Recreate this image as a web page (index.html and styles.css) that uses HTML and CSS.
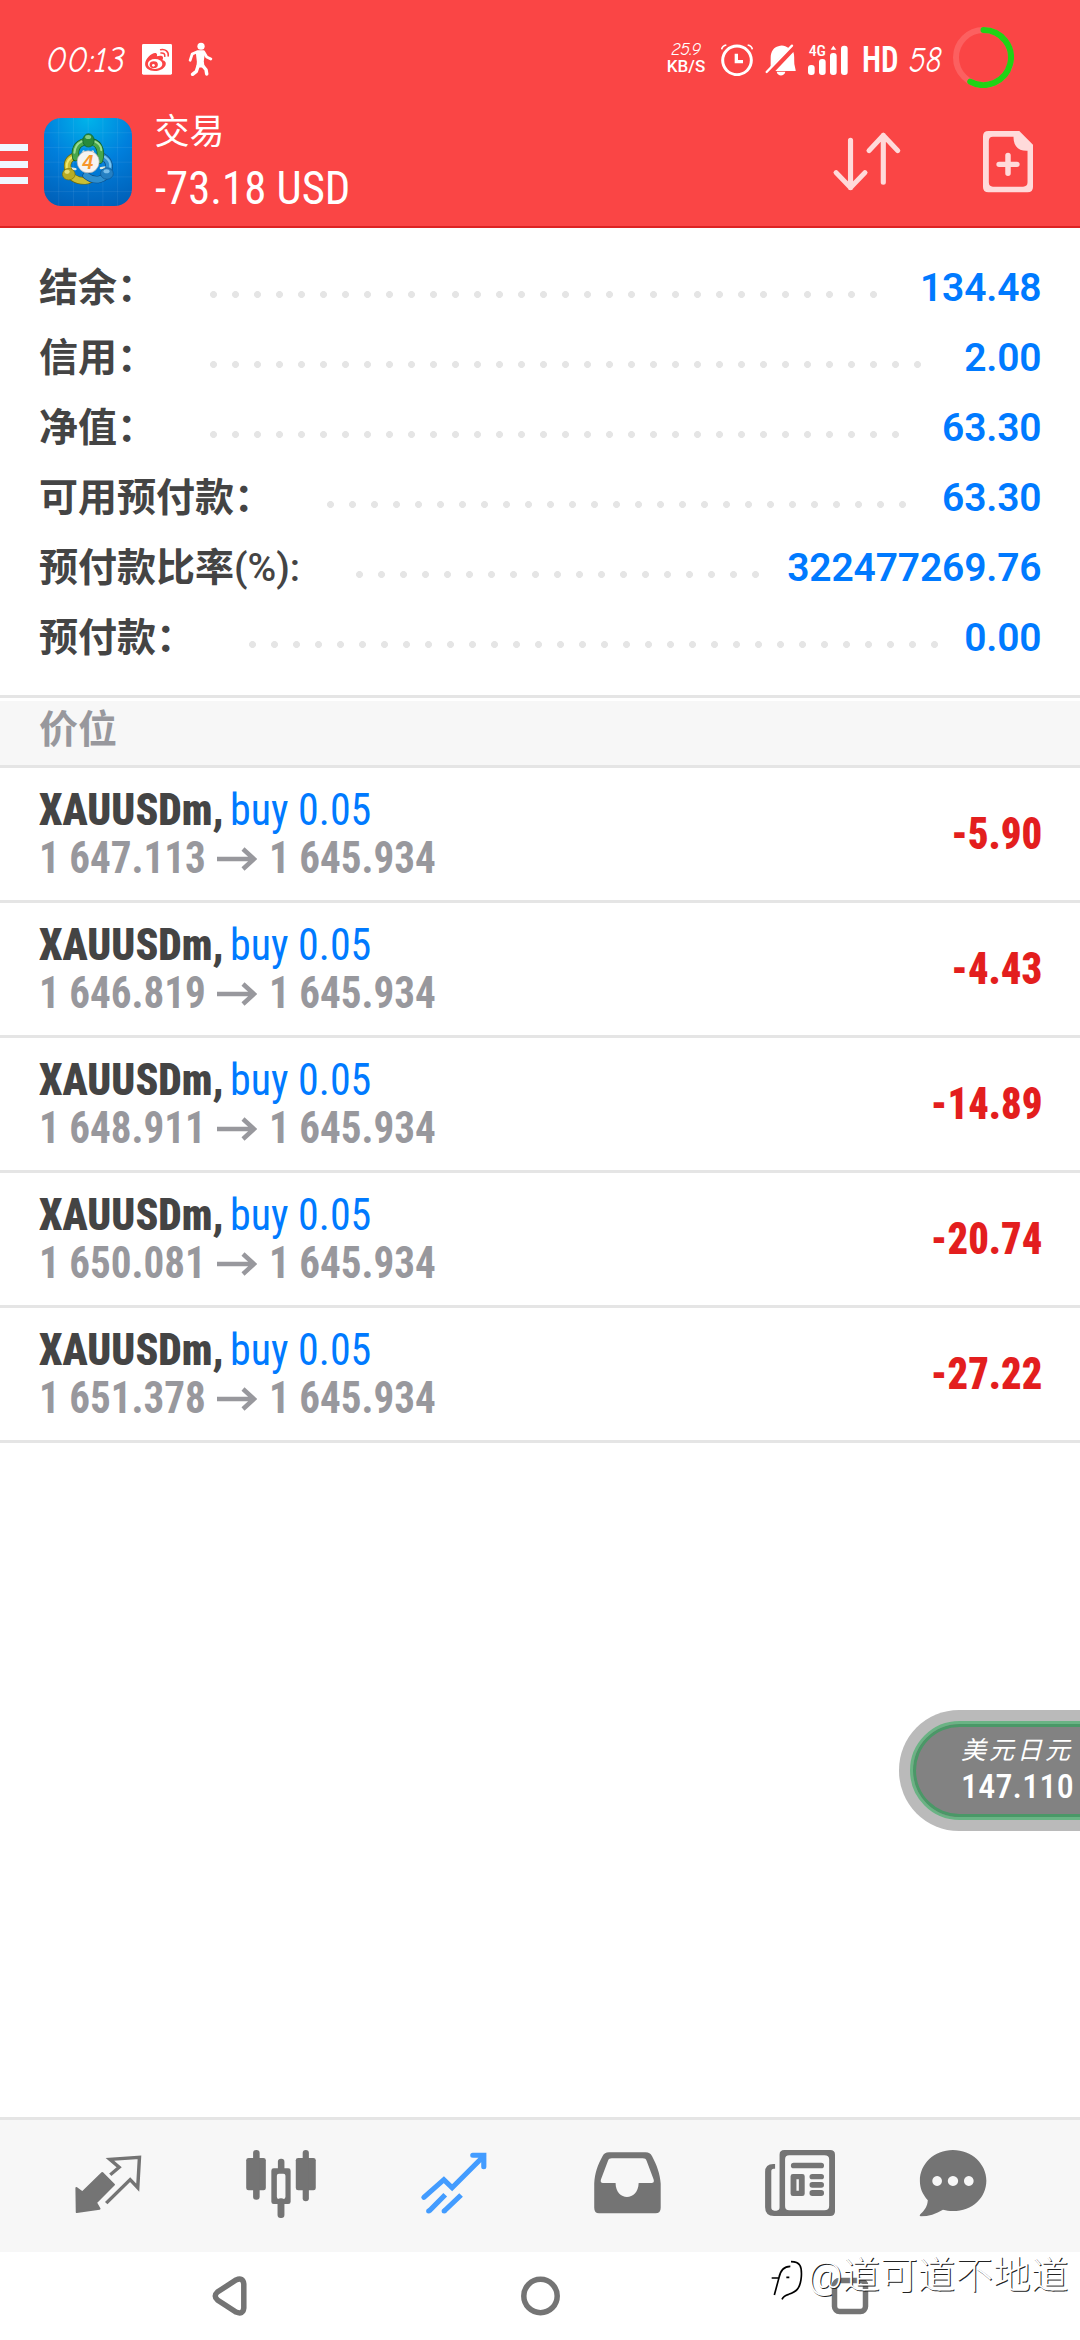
FILE: index.html
```html
<!DOCTYPE html>
<html lang="zh-CN">
<head>
<meta charset="utf-8">
<title>交易</title>
<link rel="stylesheet" href="styles.css">
</head>
<body>
<div class="screen">
  <header class="top">
    <div class="status">
      <span class="clock"><span class="hand">00:13</span></span>
      <svg class="weibo" viewBox="412 132 87 92" preserveAspectRatio="none"><rect x="412" y="132" width="87" height="92" rx="4" fill="#fff"/><path d="M421 192c0-18 22-36 31-33 5 2 4 7 3 10 8-3 18-3 18 4 0 4-2 6-1 8 7 2 9 6 9 10 0 12-16 22-32 22-17 0-28-9-28-21z" fill="#fa4545"/><ellipse cx="450" cy="192" rx="21" ry="15" fill="#fff"/><ellipse cx="446" cy="194" rx="12" ry="10" fill="#fa4545"/><circle cx="445" cy="196" r="4" fill="#fff"/><path d="M466 149c14-3 24 6 22 19M467 159c8-1 12 3 11 10" fill="none" stroke="#fa4545" stroke-width="4.500" stroke-linecap="round"/></svg>
      <svg class="walk" viewBox="545 126 78 104" preserveAspectRatio="none" fill="none" stroke="#fff" stroke-linecap="round" stroke-linejoin="round"><circle cx="585.500" cy="139" r="10.500" fill="#fff" stroke="none"/><path d="M554 181l6-19 15-7h18l9 16 12 6" stroke-width="8"/><path d="M574 158l3 27-1 14 16 0-2-15 3-24z" fill="#fff" stroke-width="7"/><path d="M577 198l-5 16-11 9M591 198l9 11 2 13" stroke-width="10"/></svg>
      <div class="indicators">
        <div class="speed"><span class="hand">25.9</span><b>KB/S</b></div>
        <svg class="alarm" viewBox="183 70 96 96" fill="none" stroke="#fff"><circle cx="231" cy="119" r="43" stroke-width="9"/><path d="M229 99v24h20" stroke-width="10"/><path d="M185 86q2-11 14-13M277 86q-2-11-14-13" stroke-width="5"/></svg>
        <svg class="bell" viewBox="316 70 93 96" fill="#fff"><path d="M333 136v-24c0-20 10-32 23-35 7-3 14-3 21 0l10 5-55 58zM347 151l54-57c4 9 2 23 3 36l4 19v2zM351 153h26c-3 15-23 15-26 0z"/><path d="M321 154l76-79" stroke="#fff" stroke-width="7" stroke-linecap="round"/></svg>
        <svg class="signal" viewBox="444 70 120 96" fill="#fff"><rect x="444" y="133" width="20" height="30" rx="9"/><rect x="477" y="115" width="20" height="48" rx="9"/><rect x="510" y="97" width="20" height="66" rx="9"/><rect x="543" y="75" width="20" height="88" rx="9"/><path d="M512 87l8-12 9 12z"/><text x="446" y="107" class="net" textLength="52" lengthAdjust="spacingAndGlyphs">4G</text></svg>
        <b class="hd"><span>HD</span></b>
        <span class="level"><span class="hand">58</span></span>
        <svg class="ring" viewBox="0 0 61 61" fill="none" stroke-width="6"><circle cx="30.500" cy="30.500" r="27.500" stroke="#fc6060"/><path d="M30.500 3A27.500 27.500 0 1 1 17.200 54.600" stroke="#20d215" stroke-linecap="round"/></svg>
      </div>
    </div>
    <div class="appbar">
      <div class="menu"><i></i><i></i><i></i></div>
      <svg class="logo" viewBox="12 12 263 263">
        <defs>
          <radialGradient id="bg" cx=".5" cy="0" r="1.050"><stop offset="0" stop-color="#00b4ea"/><stop offset=".5" stop-color="#007fdc"/><stop offset="1" stop-color="#0060b8"/></radialGradient>
        </defs>
        <rect x="12" y="12" width="263" height="263" rx="52" fill="url(#bg)"/>
        <path d="M56 12v263M100 12v263M144 12v263M188 12v263M232 12v263M12 56h263M12 100h263M12 144h263M12 188h263M12 232h263" stroke="#fff" stroke-opacity=".1" stroke-width="2"/>
        <g fill="none" stroke-linecap="round">
          <path d="M114 197c18 8 30 4 38-8M130 112l14 8 14-8M92 163l14 2M196 160l-14 2" stroke="#dfeadf" stroke-width="7"/>
          <path d="M108 124c-22 8-28 20-25 38 5 26 24 38 52 38 8 0 12-3 18-6" stroke="#6c6808" stroke-width="22"/>
          <path d="M108 124c-22 8-28 20-25 38 5 26 24 38 52 38 8 0 12-3 18-6" stroke="#c9bf35" stroke-width="18"/>
          <path d="M102 126c-18 8-24 20-22 34" stroke="#f0e96c" stroke-width="6"/>
          <path d="M188 128c18 10 22 26 16 42-8 26-38 36-66 14" stroke="#0c4c85" stroke-width="22"/>
          <path d="M188 128c18 10 22 26 16 42-8 26-38 36-66 14" stroke="#2e8fd0" stroke-width="18"/>
          <path d="M194 128c14 10 18 18 16 30" stroke="#7cc4f0" stroke-width="6"/>
          <path d="M107 130c-6-30 10-48 38-48s42 22 33 56" stroke="#0f5c25" stroke-width="22"/>
          <path d="M107 130c-6-30 10-48 38-48s42 22 33 56" stroke="#46a64a" stroke-width="18"/>
          <path d="M103 116c1-16 9-28 22-34M163 82c12 5 20 14 20 26" stroke="#9bdc93" stroke-width="6"/>
        </g>
        <g stroke-width="2">
          <ellipse cx="145" cy="79" rx="17" ry="20" fill="#288b3a" stroke="#10602a"/><ellipse cx="144" cy="69" rx="9" ry="6" fill="#84cb83"/>
          <ellipse cx="86" cy="180" rx="19" ry="17" fill="#b6ac25" stroke="#766f0b"/><ellipse cx="81" cy="173" rx="8" ry="6" fill="#e4df76"/>
          <ellipse cx="200" cy="178" rx="19" ry="17" fill="#247fc2" stroke="#0d5593"/><ellipse cx="199" cy="171" rx="9" ry="6" fill="#78bdea"/>
        </g>
        <circle cx="144" cy="143" r="33" fill="#f5f3f2" stroke="#aaa" stroke-width="2"/>
        <text x="127" y="164" class="four">4</text>
      </svg>
      <div class="heading"><h1>交易</h1><p><span>-73.18 USD</span></p></div>
      <svg class="sort" viewBox="842 390 204 189" preserveAspectRatio="none" fill="none" stroke="#ffdada" stroke-width="15" stroke-linecap="round" stroke-linejoin="round"><path d="M896 421v142M854 518l42 45 42-45M991.500 547V406M950 452l41.500-46 42 46"/></svg>
      <svg class="add" viewBox="1286 394 146 184" preserveAspectRatio="none"><path fill="#ffdada" fill-rule="evenodd" d="M1302 394h90l40 41v127q0 16-16 16h-114q-16 0-16-16V410q0-16 16-16zm13 17q-12 0-12 13v124q0 13 12 13h88q13 0 13-13v-95c-26 1-41-12-41-42z"/><path d="M1359 467v54M1333 494h52" stroke="#ffdada" stroke-width="16" stroke-linecap="round"/></svg>
    </div>
  </header>

  <section class="summary">
    <div class="line"><span>结余：</span><i class="dots" style="--n:31"></i><b>134.48</b></div>
    <div class="line"><span>信用：</span><i class="dots" style="--n:33"></i><b>2.00</b></div>
    <div class="line"><span>净值：</span><i class="dots" style="--n:32"></i><b>63.30</b></div>
    <div class="line"><span>可用预付款：</span><i class="dots" style="--n:27"></i><b>63.30</b></div>
    <div class="line"><span>预付款比率<em>(%):</em></span><i class="dots" style="--n:19"></i><b>322477269.76</b></div>
    <div class="line"><span>预付款：</span><i class="dots" style="--n:32"></i><b>0.00</b></div>
  </section>

  <h2 class="group">价位</h2>

  <ul class="positions">
    <li><div><p class="deal"><b>XAUUSDm,</b> <span>buy 0.05</span></p><p class="price"><span>1 647.113</span><svg class="to" viewBox="0 0 40 24"><path d="M0 12h37M26 2l11 10-11 10"/></svg><span>1 645.934</span></p></div><strong>-5.90</strong></li>
    <li><div><p class="deal"><b>XAUUSDm,</b> <span>buy 0.05</span></p><p class="price"><span>1 646.819</span><svg class="to" viewBox="0 0 40 24"><path d="M0 12h37M26 2l11 10-11 10"/></svg><span>1 645.934</span></p></div><strong>-4.43</strong></li>
    <li><div><p class="deal"><b>XAUUSDm,</b> <span>buy 0.05</span></p><p class="price"><span>1 648.911</span><svg class="to" viewBox="0 0 40 24"><path d="M0 12h37M26 2l11 10-11 10"/></svg><span>1 645.934</span></p></div><strong>-14.89</strong></li>
    <li><div><p class="deal"><b>XAUUSDm,</b> <span>buy 0.05</span></p><p class="price"><span>1 650.081</span><svg class="to" viewBox="0 0 40 24"><path d="M0 12h37M26 2l11 10-11 10"/></svg><span>1 645.934</span></p></div><strong>-20.74</strong></li>
    <li><div><p class="deal"><b>XAUUSDm,</b> <span>buy 0.05</span></p><p class="price"><span>1 651.378</span><svg class="to" viewBox="0 0 40 24"><path d="M0 12h37M26 2l11 10-11 10"/></svg><span>1 645.934</span></p></div><strong>-27.22</strong></li>
  </ul>

  <nav class="tabs">
    <svg viewBox="197.500 135 232.300 240" preserveAspectRatio="none"><path fill="#747474" stroke="#747474" stroke-width="6" stroke-linejoin="round" d="M297 219l34 35-52 54 10 18-66 10-1-72 17 13z"/><path fill="none" stroke="#747474" stroke-width="10" stroke-linecap="square" d="M324 221l22-19-27-24 86-6-5 91-22-24-66 67"/></svg>
    <svg viewBox="699.900 135 232.300 240" preserveAspectRatio="none" fill="#747474"><rect x="715" y="174" width="57" height="97" rx="7"/><rect x="735" y="150" width="19" height="149" rx="9"/><rect x="859" y="174" width="58" height="97" rx="7"/><rect x="879" y="150" width="18" height="154" rx="9"/><rect x="807" y="176" width="19" height="40" rx="9"/><rect x="806" y="295" width="20" height="59" rx="9"/><path fill-rule="evenodd" d="M795 205h42q7 0 7 7v93q0 7-7 7h-42q-7 0-7-7v-93q0-7 7-7zm15 16q-6 0-6 6v63q0 7 6 7h13q6 0 6-7v-63q0-6-6-6z"/></svg>
    <svg viewBox="1202.300 135 232.300 240" preserveAspectRatio="none" fill="none" stroke="#439cff" stroke-width="15" stroke-linejoin="miter"><path stroke-linecap="round" d="M1231 292l58-53 24 24 92-95M1373 166h32v34"/><path d="M1293 284l-46 48M1339 285l-48 47"/><g fill="#439cff" stroke="none"><circle cx="1245" cy="333" r="7.500"/><circle cx="1290" cy="333" r="7.500"/></g></svg>
    <svg viewBox="137 135 232.300 240" preserveAspectRatio="none"><path fill="#747474" fill-rule="evenodd" d="M201 157h106c10 0 14 3 19 12 14 28 23 52 25 82v72q0 17-15 17H172q-14 0-14-17v-73c2-30 9-53 24-81 5-9 9-12 19-12zm8 18c-6 0-9 2-11 7l-20 55c-3 9 0 12 7 12h35c0 56 66 56 67 0h36c7 0 10-3 7-12l-20-55c-2-5-5-7-11-7z"/></svg>
    <svg viewBox="641.200 135 232.300 240" preserveAspectRatio="none"><path fill="#747474" fill-rule="evenodd" d="M712 150h133q14 0 14 14v170q0 14-14 14H682q-26 0-26-26V216q0-24 24-24h5v14h-4q-7 0-7 8v108q0 10 9 10h6q9 0 9-10V164q0-14 14-14zm14 16q-12 0-12 12v140q0 13 12 13h102q14 0 14-13V178q0-12-14-12z"/><g fill="#747474"><rect x="731" y="188" width="96" height="17" rx="8"/><rect x="785" y="222" width="42" height="16" rx="8"/><rect x="785" y="246" width="42" height="17" rx="8"/><rect x="785" y="270" width="42" height="18" rx="8"/><path fill-rule="evenodd" d="M737 222h27q7 0 7 7v52q0 7-7 7h-27q-7 0-7-7v-52q0-7 7-7zm10 16v34h7v-34z"/></g></svg>
    <svg class="last" viewBox="1083 135 232.300 240" preserveAspectRatio="none"><path fill="#747474" fill-rule="evenodd" d="M1199 150c55 0 97 42 97 92s-40 91-97 91c-12 0-19-2-29-4-20 13-42 20-64 20-5 0-4-4-1-7 13-12 20-24 21-41-16-20-23-36-23-59 0-50 41-92 96-92zm-46 78a14 15 0 1 0 .1 0zm46 0a15 15 0 1 0 .1 0zm46 0a14 15 0 1 0 .1 0z"/></svg>
  </nav>

  <footer class="sysnav">
    <svg viewBox="212 2275 36 42" class="back"><path d="M236 2280q7-3 7.800 4v24q-.8 7-7.800 4l-18.500-12q-4.500-4 0-8z"/></svg>
    <svg viewBox="520.500 2276 39 40" class="home"><circle cx="540" cy="2296" r="16.700"/></svg>
    <svg viewBox="831 2277 38 38" class="recent"><rect x="834.500" y="2280.500" width="31" height="31" rx="5"/></svg>
  </footer>

  <aside class="quote"><div><span>美元日元</span><b>147.110</b></div></aside>
  <div class="mark"><svg viewBox="0 0 96 135" fill="none" stroke="#000" stroke-width="5"><path d="M10 105l14-52c4-22 16-34 34-34M2 54h24M60 5c28 0 33 15 31 45-3 38-17 46-38 53-10 3-17 8-20 15M46 52h9"/></svg><span>@道可道不地道</span></div>
</div>
</body>
</html>
```
FILE: styles.css
```css
* { box-sizing: border-box; }
body, h1, h2, p, ul { margin: 0; padding: 0; }
body { background: #fff; font-family: Roboto, "Noto Sans CJK SC", sans-serif; }
svg { display: block; flex: none; }
.screen { position: relative; width: 1080px; height: 2340px; overflow: hidden; display: flex; flex-direction: column; background: #fff; }

.top { height: 228px; background: #fa4545; border-bottom: 2px solid #dc2323; color: #fff; }
.status { height: 100px; padding: 19px 66px 0 46px; display: flex; align-items: center; }
.hand { display: inline-block; font-family: "Comic Neue", cursive; font-style: italic; transform-origin: 0 50%; white-space: nowrap; }
.clock { width: 96px; font-size: 37px; }
.clock .hand { transform: scaleX(.93); }
.weibo { width: 30px; height: 30.700px; }
.walk { width: 27px; height: 34.700px; margin-left: 15px; }
.indicators { margin-left: auto; display: flex; align-items: center; }
.speed { width: 38px; margin-right: 16px; display: flex; flex-direction: column; align-items: center; line-height: 16px; font-size: 18px; }
.speed .hand { letter-spacing: -.500px; margin-top: -3px; }
.speed b { font-size: 17px; line-height: 17px; font-weight: 500; }
.alarm { width: 32px; height: 32px; margin-right: 12px; }
.bell { width: 31px; height: 32px; margin-right: 12px; }
.signal { width: 40px; height: 32px; margin-right: 14px; overflow: visible; }
.net { font: 500 44px "Roboto Condensed", sans-serif; }
.hd { width: 33px; margin-right: 14px; font: 600 36px/36px "Roboto Condensed", sans-serif; }
.hd span { display: inline-block; transform: scaleX(.86); transform-origin: 0 50%; }
.level { width: 34px; margin-right: 10px; font-size: 36px; }
.level .hand { transform: scaleX(.86); }
.ring { width: 61px; height: 61px; margin-top: -4px; }

.appbar { height: 126px; display: flex; padding-right: 47px; }
.menu { width: 27.500px; padding-top: 44px; display: flex; flex-direction: column; gap: 9.700px; }
.menu i { height: 7px; background: #f0f7ff; }
.logo { width: 88px; height: 88px; margin: 18px 0 0 16.500px; }
.four { font: italic 700 58px "Liberation Sans", sans-serif; fill: #f7962b; }
.heading { margin-left: 22.500px; padding-top: 6px; flex: 1; }
.heading h1 { font-size: 35px; line-height: 54px; font-weight: 400; }
.heading p { font: 400 47px/55px "Roboto Condensed", sans-serif; }
.heading p span { display: inline-block; transform: scaleX(.952); transform-origin: 0 50%; }
.sort { width: 70px; height: 63px; margin: 30px 81px 0 0; }
.add { width: 50px; height: 61.300px; margin-top: 31.300px; }

.summary { height: 467px; padding: 25px 38.500px 0 39px; }
.line { height: 70px; display: flex; align-items: center; color: #444; font-size: 39px; line-height: 70px; font-weight: 700; }
.line em { font-style: normal; font-weight: 500; display: inline-block; width: 68px; white-space: nowrap; }
.dots { width: calc(var(--n) * 22px); height: 7px; margin: 12.500px 0 0 54px; background: radial-gradient(circle at 3.500px 3.500px, #e5e5e5 3.100px, transparent 3.800px) 0 0 / 22px 7px; }
.line b { margin-left: auto; color: #007aff; font-weight: 600; letter-spacing: -.150px; }

.group { height: 73px; border-top: 3px solid #e5e5e5; border-bottom: 3px solid #e5e5e5; padding-left: 39px; background: linear-gradient(#fff 3px, #f7f7f7 3px); color: #98989d; font-size: 39px; line-height: 64px; font-weight: 700; }

.positions { list-style: none; flex: 1; }
.positions li { height: 135px; padding: 2px 38px 0 39px; display: flex; align-items: center; justify-content: space-between; border-bottom: 3px solid #e5e5e5; font: 700 43.500px/48px "Roboto Condensed", sans-serif; }
.deal { display: flex; color: #444; }
.deal b { width: 193px; transform: scaleX(.957); transform-origin: 0 50%; }
.deal span { color: #007aff; font-weight: 400; transform: scaleX(.965); transform-origin: 0 50%; margin-left: -2px; }
.price { display: flex; align-items: center; color: #98989d; }
.price span { width: 166px; white-space: nowrap; transform: scaleX(.945); transform-origin: 0 50%; }
.to { width: 40px; height: 24px; margin: 0 12px 0 12px; fill: none; stroke: #98989d; stroke-width: 4.500; }
.positions strong { color: #e31e1e; transform: scaleX(.93); transform-origin: 100% 50%; }

.tabs { height: 135px; border-top: 3px solid #e5e5e5; background: #f7f7f7; padding: 25px 0 0 68px; display: flex; gap: 93px; }
.tabs svg { width: 80px; height: 80px; }
.tabs .last { margin-left: -20px; }
.sysnav { height: 88px; display: flex; align-items: center; fill: none; stroke: #747474; stroke-width: 5.500; }
.back { width: 36px; height: 42px; margin-left: 212px; }
.home { width: 39px; height: 40px; margin-left: 272.500px; }
.recent { width: 38px; height: 38px; margin-left: 271.500px; }

.quote { position: absolute; left: 899px; top: 1710px; width: 240px; height: 121px; padding: 11px; border-radius: 60px; background: #bababa; color: #fff; }
.quote div { height: 99px; border: 3px solid #6ab384; border-radius: 50px; box-shadow: inset 0 0 0 3px #4a9867; background: #828282; padding: 10px 0 0 48px; display: flex; flex-direction: column; }
.quote span { font-size: 25px; line-height: 34px; letter-spacing: 3px; font-style: italic; font-weight: 400; }
.quote b { font: 500 34px/36px "Roboto Condensed", sans-serif; letter-spacing: .200px; }
.mark { position: absolute; left: 771px; top: 2249px; display: flex; color: #fff; font-size: 37.500px; line-height: 52px; font-weight: 300; text-shadow: 1px 1px 0 #222; white-space: nowrap; letter-spacing: .200px; }
.mark svg { width: 32px; height: 45px; margin: 11px 5px 0 0; }
```
